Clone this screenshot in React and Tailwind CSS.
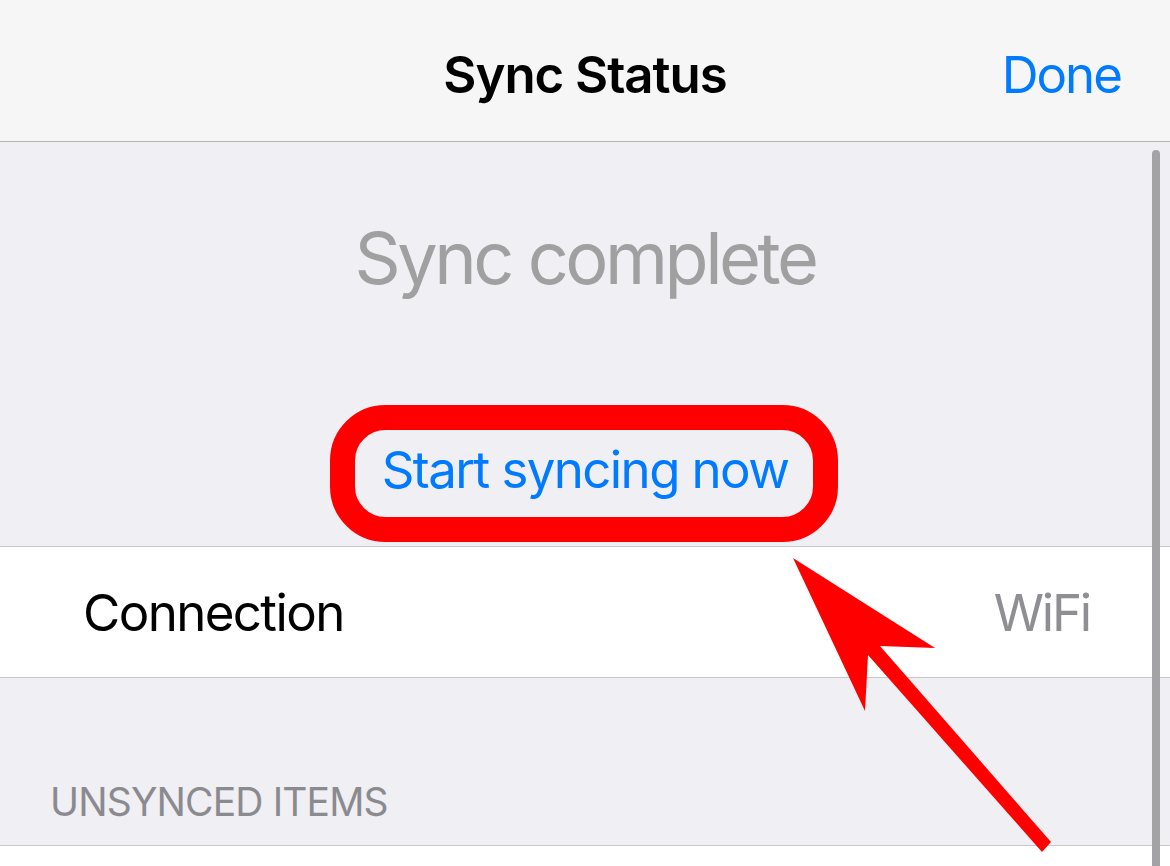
import React from 'react';

const font = { fontFamily: 'Inter, "Noto Sans", sans-serif' };

function Annotation() {
  return (
    <svg
      className="pointer-events-none absolute inset-0"
      width="1170"
      height="866"
      viewBox="0 0 1170 866"
    >
      <rect x="342.5" y="417.5" width="483" height="112" rx="43" ry="43" fill="none" stroke="#ff0000" strokeWidth="25" />
      <polygon
        points="793,558 935,648 880,646 1051,842 1042,852 868,655 865,711"
        fill="#ff0000"
      />
    </svg>
  );
}

export default function App() {
  return (
    <div className="relative w-[1170px] h-[866px] overflow-hidden bg-[#efeff4]" style={font}>
      <div className="h-[142px] bg-[#f6f6f7] border-b border-[#b2b2b2] grid grid-cols-[1fr_auto_1fr] items-center pt-[8px]">
        <div />
        <div className="text-[51px] font-semibold text-black leading-none tracking-[-1.05px]">Sync Status</div>
        <div className="flex justify-end pr-[49px]">
          <span className="text-[51px] text-[#007aff] leading-none tracking-[-2px]">Done</span>
        </div>
      </div>

      <div className="flex flex-col items-center pt-[80px] pb-[51px]">
        <div className="text-[72px] text-[#a0a0a0] leading-none tracking-[-3.5px]">Sync complete</div>
        <button className="mt-[150px] text-[51px] text-[#007aff] leading-none tracking-[-1.6px]">Start syncing now</button>
      </div>

      <div className="h-[132px] bg-white border-y border-[#c8c7cc] flex items-center justify-between pl-[83px] pr-[80px]">
        <span className="text-[51px] text-black leading-none tracking-[-1.6px]">Connection</span>
        <span className="text-[51px] text-[#8e8e93] leading-none tracking-[-2.2px]">WiFi</span>
      </div>

      <div className="pt-[104px] pb-[24px] pl-[50px]">
        <div className="text-[39px] text-[#8a8a8f] leading-none tracking-[-0.85px]">UNSYNCED ITEMS</div>
      </div>

      <div className="h-[40px] bg-white border-t border-[#c8c7cc]" />

      <div className="absolute right-[10px] top-[150px] w-[8px] h-[760px] rounded-full bg-[#a3a3a6]" />

      <Annotation />
    </div>
  );
}
